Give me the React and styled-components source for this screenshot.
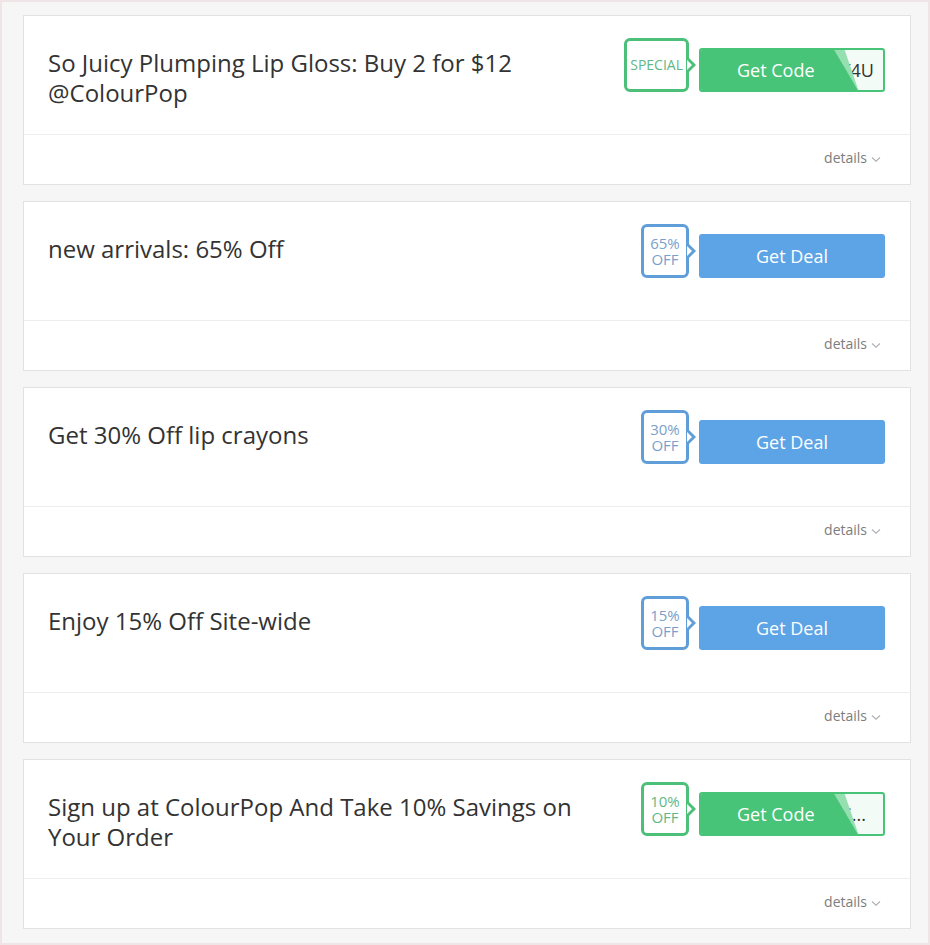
import React from 'react';
import styled, { createGlobalStyle } from 'styled-components';

const GlobalStyle = createGlobalStyle`
  html, body {
    margin     : 0;
    padding    : 0;
    background : #ffffff;
  }
  body {
    font-family : "Open Sans", "Noto Sans", sans-serif;
  }
`;

const colors = {
  green       : '#48c479',
  greenBorder : '#4cbf78',
  greenText   : '#5fb886',
  greenFold   : '#95dfb0',
  blue        : '#5ca4e6',
  blueBorder  : '#5f9ed8',
  blueText    : '#7a9fcb',
};

const Frame = styled.div`
  box-sizing     : border-box;
  width          : 930px;
  height         : 945px;
  border         : 2px solid #efe4e6;
  background     : #f6f6f6;
  padding        : 13px 17px 0 21px;
  display        : flex;
  flex-direction : column;
  gap            : 16px;
`;

const Card = styled.div`
  box-sizing     : border-box;
  height         : 170px;
  background     : #ffffff;
  border         : 1px solid #e2e2e2;
  display        : flex;
  flex-direction : column;
`;

const Main = styled.div`
  height          : 119px;
  box-sizing      : border-box;
  padding         : 22px 25px 0 24px;
  display         : flex;
  justify-content : space-between;
  align-items     : flex-start;
  border-bottom   : 1px solid #ededed;
`;

const Title = styled.h3`
  margin      : 10px 0 0;
  max-width   : 540px;
  font-size   : 24px;
  font-weight : 400;
  line-height : 30px;
  color       : #333333;
`;

const Actions = styled.div`
  display     : flex;
  align-items : flex-end;
  gap         : 10px;
  flex-shrink : 0;
`;

const Badge = styled.div`
  position        : relative;
  box-sizing      : border-box;
  height          : 54px;
  min-width       : 48px;
  padding         : 0 3px;
  border          : 3px solid ${p => p.$green ? colors.greenBorder : colors.blueBorder};
  border-radius   : 6px;
  background      : #ffffff;
  display         : flex;
  flex-direction  : column;
  justify-content : center;
  align-items     : center;
  color           : ${p => p.$green ? colors.greenText : colors.blueText};
  font-size       : ${p => p.$small ? '14px' : '15px'};
  line-height     : 16px;
  text-transform  : uppercase;

  &::before, &::after {
    content      : '';
    position     : absolute;
    top          : 50%;
    width        : 0;
    height       : 0;
    border-style : solid;
  }
  &::before {
    right        : -10px;
    margin-top   : -7px;
    border-width : 7px 0 7px 7px;
    border-color : transparent transparent transparent ${p => p.$green ? colors.greenBorder : colors.blueBorder};
  }
  &::after {
    right        : -6px;
    margin-top   : -5px;
    border-width : 5px 0 5px 5px;
    border-color : transparent transparent transparent #ffffff;
  }
`;

const DealButton = styled.button`
  width         : 186px;
  height        : 44px;
  border        : none;
  border-radius : 3px;
  background    : ${colors.blue};
  color         : #ffffff;
  font-family   : inherit;
  font-size     : 18px;
  cursor        : pointer;
`;

const CodeButton = styled.button`
  position      : relative;
  box-sizing    : border-box;
  width         : 186px;
  height        : 44px;
  padding       : 0;
  border        : 2px solid ${colors.green};
  border-radius : 3px;
  background    : #f3fbf6;
  font-family   : inherit;
  cursor        : pointer;
  overflow      : hidden;
`;

const CodeText = styled.span`
  position      : absolute;
  right         : ${p => p.$right}px;
  top           : 0;
  bottom        : 0;
  display       : flex;
  align-items   : center;
  font-size     : 18px;
  color         : #333333;
  white-space   : nowrap;
`;

const CodeCover = styled.span`
  position    : absolute;
  inset       : -2px;
  background  : ${colors.green};
  clip-path   : polygon(0 0, 134px 0, 160px 100%, 0 100%);
  color       : #ffffff;
  font-size   : 18px;
  display     : flex;
  align-items : center;
  padding-left: 38px;
`;

const CodeFold = styled.span`
  position   : absolute;
  inset      : -2px;
  background : ${colors.greenFold};
  clip-path  : polygon(133px 0, 145px 0, 160px 100%);
`;

const Details = styled.div`
  flex            : 1;
  display         : flex;
  justify-content : flex-end;
  align-items     : center;
  padding         : 0 29px 4px 0;
  font-size       : 14px;
  color           : #7d7d7d;
  gap             : 4px;
`;

const Chevron = () => (
  <svg width="10" height="7" viewBox="0 0 10 7" style={{ marginTop: 4 }}>
    <path d="M1 1.5 L5 5.2 L9 1.5" fill="none" stroke="#b0b0b0" strokeWidth="1.1" />
  </svg>
);

const offers = [
  { title: 'So Juicy Plumping Lip Gloss: Buy 2 for $12 @ColourPop', badge: ['SPECIAL'], type: 'code', code: 'JUICY4U', codeRight: 9 },
  { title: 'new arrivals: 65% Off', badge: ['65%', 'OFF'], type: 'deal' },
  { title: 'Get 30% Off lip crayons', badge: ['30%', 'OFF'], type: 'deal' },
  { title: 'Enjoy 15% Off Site-wide', badge: ['15%', 'OFF'], type: 'deal' },
  { title: 'Sign up at ColourPop And Take 10% Savings on Your Order', badge: ['10%', 'OFF'], type: 'code', code: 'S...', codeRight: 17 },
];

const Offer = ({ offer }) => {
  const green = offer.type === 'code';
  return (
    <Card>
      <Main>
        <Title>{offer.title}</Title>
        <Actions>
          <Badge $green={green} $small={offer.badge.length === 1}>
            {offer.badge.map(line => <span key={line}>{line}</span>)}
          </Badge>
          {green ? (
            <CodeButton>
              <CodeText $right={offer.codeRight}>{offer.code}</CodeText>
              <CodeFold />
              <CodeCover>Get Code</CodeCover>
            </CodeButton>
          ) : (
            <DealButton>Get Deal</DealButton>
          )}
        </Actions>
      </Main>
      <Details>
        details <Chevron />
      </Details>
    </Card>
  );
};

export default function App() {
  return (
    <>
      <GlobalStyle />
      <Frame>
        {offers.map(o => <Offer key={o.title} offer={o} />)}
      </Frame>
    </>
  );
}
